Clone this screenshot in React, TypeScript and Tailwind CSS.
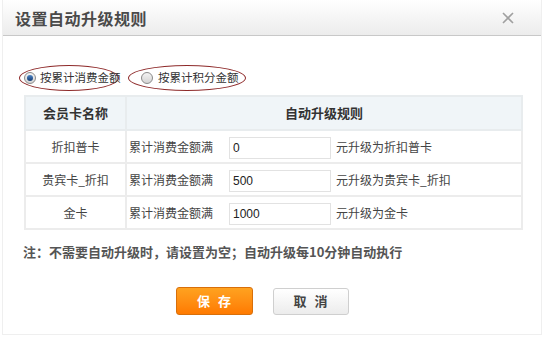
const font = { fontFamily: '"Noto Sans CJK SC", "Liberation Sans", sans-serif' }

const rows = [
  { name: '折扣普卡', value: '0', target: '折扣普卡' },
  { name: '贵宾卡_折扣', value: '500', target: '贵宾卡_折扣' },
  { name: '金卡', value: '1000', target: '金卡' },
]

function Radio({ checked }: { checked?: boolean }) {
  return (
    <span className="w-[12px] h-[12px] shrink-0 rounded-full border border-[#8a8a8a] bg-gradient-to-b from-[#f4f4f4] to-[#d4d4d4] flex items-center justify-center">
      {checked && <span className="w-[6px] h-[6px] rounded-full bg-gradient-to-b from-[#4f86c6] to-[#123a73]" />}
    </span>
  )
}

export default function App() {
  return (
    <div className="w-[544px] h-[337px] bg-white overflow-hidden" style={font}>
      <div className="mx-[2px] h-[335px] border-x border-b border-[#efefef] flex flex-col">
        <div className="h-[36px] shrink-0 flex items-center justify-between pl-[12px] pr-[27px] bg-gradient-to-b from-white to-[#ececec] border-b border-[#c8c8c8]">
          <span className="text-[16px] font-bold text-[#4a4a4a] tracking-[0.5px]">设置自动升级规则</span>
          <svg width="12" height="12" viewBox="0 0 12 12" className="mt-[1px]">
            <path d="M1 1 L11 11 M11 1 L1 11" stroke="#a0a0a0" strokeWidth="1.6" />
          </svg>
        </div>

        <div className="flex items-center gap-[9px] pl-[16px] mt-[29px] text-[11.5px] text-[#333] whitespace-nowrap">
          <span className="flex items-center gap-[4px] w-[100px] h-[26px] pl-[4px] rounded-[50%] border border-[#8e2a2a]">
            <Radio checked />
            <span>按累计消费金额</span>
          </span>
          <span className="flex items-center gap-[5px] w-[118px] h-[26px] pl-[12px] rounded-[50%] border border-[#8e2a2a]">
            <Radio />
            <span>按累计积分金额</span>
          </span>
        </div>

        <table className="ml-[21px] mt-[4px] w-[499px] border-collapse text-[12px] text-[#444]">
          <thead>
            <tr className="h-[34px] bg-[#f0f5f8]">
              <th className="w-[101px] border-2 border-[#e8ecee] text-[13px] font-bold text-[#333]">会员卡名称</th>
              <th className="border-2 border-[#e8ecee] text-[13px] font-bold text-[#333]">自动升级规则</th>
            </tr>
          </thead>
          <tbody>
            {rows.map((r) => (
              <tr key={r.name} className="h-[33px]">
                <td className="border-2 border-[#ececec] text-center">{r.name}</td>
                <td className="border-2 border-[#ececec] pl-[2px]">
                  <div className="flex items-center">
                    <span className="w-[100px]">累计消费金额满</span>
                    <span className="w-[102px] h-[22px] border border-[#e2e2e2] mt-[2px] pl-[3px] flex items-center text-[12px] text-[#222]" style={{ fontFamily: '"Liberation Sans", sans-serif' }}>{r.value}</span>
                    <span className="ml-[5px]">元升级为{r.target}</span>
                  </div>
                </td>
              </tr>
            ))}
          </tbody>
        </table>

        <p className="ml-[20px] mt-[12px] text-[13px] font-bold text-[#555]">注：不需要自动升级时，请设置为空；自动升级每10分钟自动执行</p>

        <div className="flex justify-center gap-[20px] mt-[25px] pr-[20px]">
          <button className="w-[77px] h-[28px] rounded-[3px] border border-[#d86f0a] bg-gradient-to-b from-[#ffa21f] to-[#ff7a00] text-white text-[13px] font-bold tracking-[8px] pl-[8px]">保存</button>
          <button className="w-[76px] h-[27px] mt-[1px] rounded-[3px] border border-[#cfcfcf] bg-gradient-to-b from-white to-[#ececec] text-[#444] text-[13px] font-bold tracking-[8px] pl-[8px]">取消</button>
        </div>
      </div>
    </div>
  )
}
